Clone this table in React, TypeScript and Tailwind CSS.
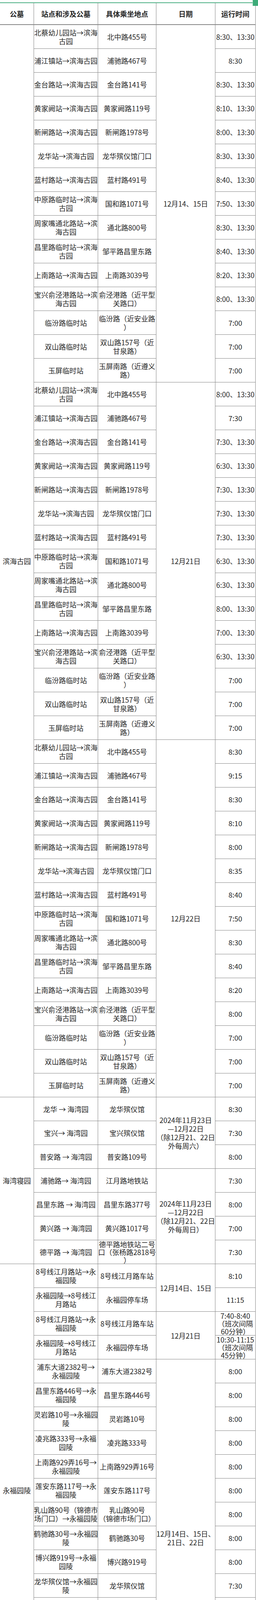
import React from 'react';

type Row = { s: string; p: string; t: string; pl?: boolean; tl?: boolean; nowrap?: boolean };
type DateGroup = { d: string; rows: Row[] };
type Cem = { name: string; dates: DateGroup[] };

const SPAN: Record<number, string> = {
  2: 'row-span-2',
  3: 'row-span-3',
  4: 'row-span-4',
  7: 'row-span-7',
  15: 'row-span-15',
  19: 'row-span-19',
  45: 'row-span-45',
};

const binhaiStations: [string, string][] = [
  ['北蔡幼儿园站→滨海\n古园', '北中路455号'],
  ['浦江镇站→滨海古园', '浦驰路467号'],
  ['金台路站→滨海古园', '金台路141号'],
  ['黄家阙站→滨海古园', '黄家阙路119号'],
  ['新闸路站→滨海古园', '新闸路1978号'],
  ['龙华站→滨海古园', '龙华殡仪馆门口'],
  ['蓝村路站→滨海古园', '蓝村路491号'],
  ['中原路临时站→滨海\n古园', '国和路1071号'],
  ['周家嘴通北路站→滨\n海古园', '通北路800号'],
  ['昌里路临时站→滨海\n古园', '邹平路昌里东路'],
  ['上南路站→滨海古园', '上南路3039号'],
  ['宝兴俞泾港路站→滨\n海古园', '俞泾港路（近平型\n关路口）'],
  ['临汾路临时站', '临汾路（近安业路\n）'],
  ['双山路临时站', '双山路157号（近\n甘泉路）'],
  ['玉屏临时站', '玉屏南路（近遵义\n路）'],
];

const t1 = ['8:30、13:30', '8:30', '8:30、13:30', '8:10、13:30', '8:00、13:30', '8:30、13:30', '8:40、13:30', '7:50、13:30', '8:30、13:30', '8:40、13:30', '8:20、13:30', '8:00、13:30', '7:00', '7:00', '7:00'];
const t2 = ['8:00、13:30', '7:30', '7:30、13:30', '6:30、13:30', '7:30、13:30', '7:30、13:30', '7:30、13:30', '6:30、13:30', '6:30、13:30', '8:00、13:30', '7:00、13:30', '6:30、13:30', '7:00', '7:00', '7:00'];
const t3 = ['8:30', '9:15', '8:30', '8:10', '8:00', '8:35', '8:40', '7:50', '8:30', '8:40', '8:20', '8:00', '7:00', '7:00', '7:00'];

const mk = (times: string[]): Row[] => binhaiStations.map(([s, p], i) => ({ s, p, t: times[i] }));

const data: Cem[] = [
  {
    name: '滨海古园',
    dates: [
      { d: '12月14、15日', rows: mk(t1) },
      { d: '12月21日', rows: mk(t2) },
      { d: '12月22日', rows: mk(t3) },
    ],
  },
  {
    name: '海湾寝园',
    dates: [
      {
        d: '2024年11月23日\n—12月22日\n（除12月21、22日\n外每周六）',
        rows: [
          { s: '龙华 → 海湾园', p: '龙华殡仪馆', t: '8:30' },
          { s: '宝兴→ 海湾园', p: '宝兴殡仪馆', t: '7:30' },
          { s: '普安路 → 海湾园', p: '普安路109号', t: '8:00' },
        ],
      },
      {
        d: '2024年11月23日\n—12月22日\n（除12月21、22日\n外每周日）',
        rows: [
          { s: '浦驰路→ 海湾园', p: '江月路地铁站', t: '7:30' },
          { s: '昌里东路 → 海湾园', p: '昌里东路377号', t: '8:00' },
          { s: '黄兴路 → 海湾园', p: '黄兴路1017号', t: '7:00' },
          { s: '德平路 → 海湾园', p: '德平路地铁站二号\n口（张杨路2818号\n）', t: '7:30', pl: true },
        ],
      },
    ],
  },
  {
    name: '永福园陵',
    dates: [
      {
        d: '12月14日、15日',
        rows: [
          { s: '8号线江月路站→永\n福园陵', p: '8号线江月路车站', t: '8:10' },
          { s: '永福园陵→8号线江\n月路站', p: '永福园停车场', t: '11:15' },
        ],
      },
      {
        d: '12月21日',
        rows: [
          { s: '8号线江月路站→永\n福园陵', p: '8号线江月路车站', t: '7:40-8:40\n（班次间隔\n60分钟）', tl: true },
          { s: '永福园陵→8号线江\n月路站', p: '永福园停车场', t: '10:30-11:15\n（班次间隔\n45分钟）', tl: true },
        ],
      },
      {
        d: '12月14日、15日、\n21日、22日',
        rows: [
          { s: '浦东大道2382号→\n永福园陵', p: '浦东大道2382号', t: '8:00' },
          { s: '昌里东路446号→永\n福园陵', p: '昌里东路446号', t: '8:00' },
          { s: '灵岩路10号→永福园\n陵', p: '灵岩路10号', t: '8:00' },
          { s: '凌兆路333号→永福\n园陵', p: '凌兆路333号', t: '8:00' },
          { s: '上南路929弄16号→\n永福园陵', p: '上南路929弄16号', t: '8:00' },
          { s: '莲安东路117号→永\n福园陵', p: '莲安东路117号', t: '8:00' },
          { s: '乳山路90号（锦德市\n场门口）→永福园陵', p: '乳山路90号\n（锦德市场门口）', t: '8:00' },
          { s: '鹤驰路30号→永福园\n陵', p: '鹤驰路30号', t: '8:00' },
          { s: '博兴路919号→永福\n园陵', p: '博兴路919号', t: '8:00' },
          { s: '龙华殡仪馆→永福园\n陵', p: '龙华殡仪馆', t: '7:30' },
          { s: '宝兴殡仪馆→永福园\n陵', p: '宝兴殡仪馆', t: '7:30' },
          { s: '抚顺路31号3幢靠近\n长岭路→永福园陵', p: '抚顺路31号3幢靠近长岭路', t: '7:30', nowrap: true },
          { s: '国和路1038号→永\n福园陵', p: '国和路1038号', t: '7:30' },
          { s: '西仓桥街116号→永\n福园陵', p: '西仓桥街116号', t: '7:30' },
          { s: '民和路213号→永福\n园陵', p: '民和路213号', t: '7:30' },
        ],
      },
    ],
  },
];

const cell = 'flex h-[61px] items-center justify-center border-r border-b border-[#858585] text-center';
const spanCell = 'flex items-center justify-center border-r border-b border-[#858585] text-center';

function Txt({ children, tight }: { children: string; tight?: boolean }) {
  return (
    <div className={`shrink-0 whitespace-pre text-center ${tight ? 'leading-[20px]' : 'leading-[22px]'}`}>{children}</div>
  );
}

export default function App() {
  const cells: React.ReactNode[] = [];
  let k = 0;
  data.forEach((cem) => {
    const total = cem.dates.reduce((a, g) => a + g.rows.length, 0);
    cem.dates.forEach((g, gi) => {
      g.rows.forEach((r, ri) => {
        if (gi === 0 && ri === 0) {
          cells.push(
            <div key={k++} className={`${spanCell} ${SPAN[total]}`}>
              <Txt>{cem.name}</Txt>
            </div>
          );
        }
        cells.push(
          <div key={k++} className={cell}>
            <Txt>{r.s}</Txt>
          </div>
        );
        cells.push(
          <div key={k++} className={r.nowrap ? `${cell} overflow-hidden` : cell}>
            <Txt tight={r.pl}>{r.p}</Txt>
          </div>
        );
        if (ri === 0) {
          cells.push(
            <div key={k++} className={`${spanCell} ${SPAN[g.rows.length]}`}>
              <Txt>{g.d}</Txt>
            </div>
          );
        }
        cells.push(
          <div key={k++} className={cell}>
            <Txt tight={r.tl}>{r.t}</Txt>
          </div>
        );
      });
    });
  });

  const head = 'flex h-[58px] items-center justify-center border-t-2 border-t-[#4caf84] border-r border-r-[#858585] border-b-2 border-b-[#858585] font-bold';

  return (
    <div className="relative h-[4429px] w-[660px] overflow-hidden bg-white font-['Noto_Sans_CJK_SC','Noto_Sans',sans-serif] text-[18px] text-[#262626]">
      <div className="absolute right-0 top-0 h-[15px] w-[14px] border-l border-[#9fd6bb] bg-[#3dab78]" />
      <div className="h-[6px]" />
      <div className="grid w-[654px] grid-cols-[87px_164px_149px_151px_103px] grid-rows-[58px] auto-rows-[61px] content-start">
        <div className={head}>公墓</div>
        <div className={head}>站点和涉及公墓</div>
        <div className={head}>具体乘坐地点</div>
        <div className={head}>日期</div>
        <div className={head}>运行时间</div>
        {cells}
      </div>
      <div className="h-[34px] w-[654px] border-r border-[#858585] pt-[8px]">
        <div className="-ml-[4px] whitespace-nowrap text-[17px] leading-[22px]">备注：定点班车购票事宜请市民提前与公墓联系。</div>
      </div>
    </div>
  );
}
